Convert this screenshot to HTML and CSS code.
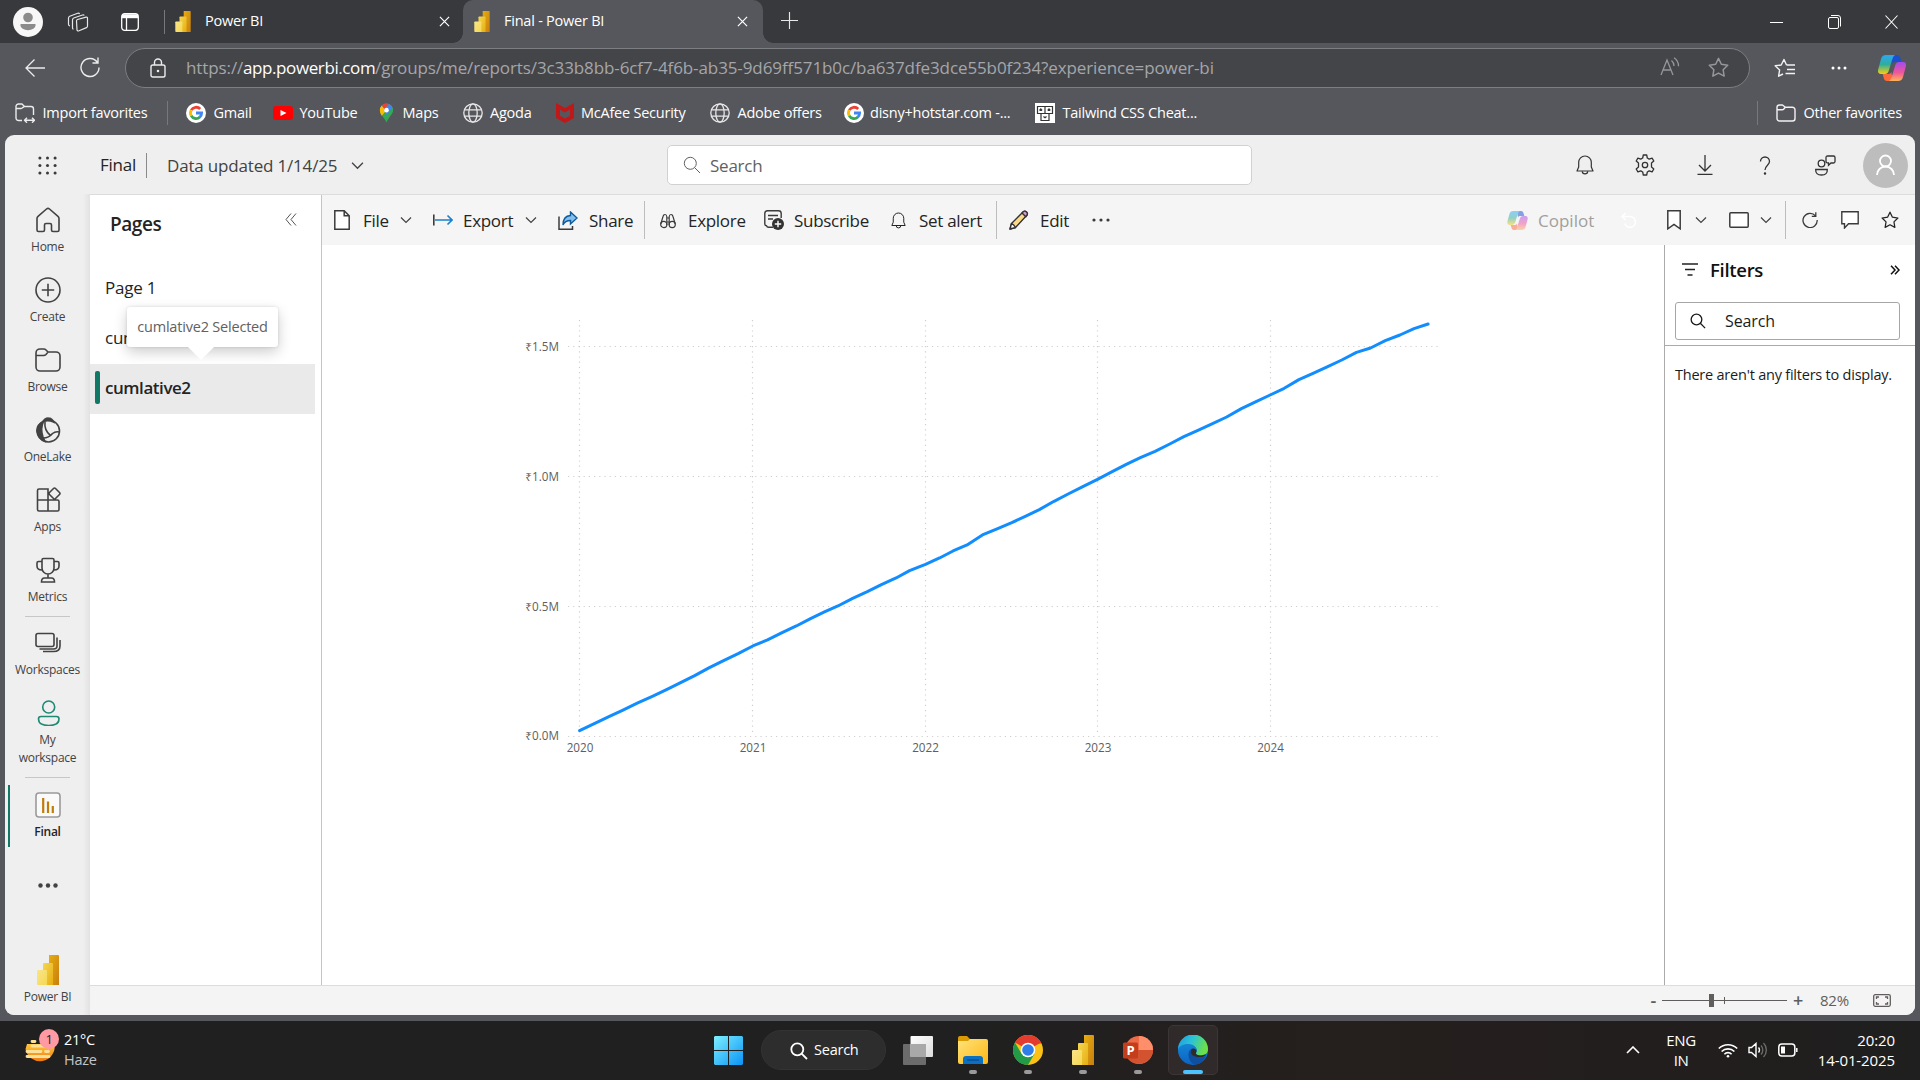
FILE: index.html
```html
<!DOCTYPE html>
<html lang="en">
<head>
<meta charset="utf-8">
<title>Final - Power BI</title>
<link rel="stylesheet" href="styles.css">
</head>
<body>
<svg class="defs" width="0" height="0">
  <defs>
    <linearGradient id="pb1" x1="0" y1="0" x2="1" y2="1"><stop offset="0" stop-color="#e6ad10"/><stop offset="1" stop-color="#c87e0e"/></linearGradient>
    <linearGradient id="pb2" x1="0" y1="0" x2="1" y2="1"><stop offset="0" stop-color="#f6d751"/><stop offset="1" stop-color="#e6ad10"/></linearGradient>
    <linearGradient id="pb3" x1="0" y1="0" x2="1" y2="1"><stop offset="0" stop-color="#f9e589"/><stop offset="1" stop-color="#f6d751"/></linearGradient>
    <linearGradient id="cpA" x1="0" y1="0" x2="0" y2="1"><stop offset="0" stop-color="#2ba7f5"/><stop offset=".5" stop-color="#2fae9a"/><stop offset="1" stop-color="#f7d00d"/></linearGradient>
    <linearGradient id="cpB" x1="0" y1="0" x2="0" y2="1"><stop offset="0" stop-color="#a34bf0"/><stop offset=".55" stop-color="#f0559b"/><stop offset="1" stop-color="#ffb357"/></linearGradient>
    <linearGradient id="win" x1="0" y1="0" x2="1" y2="1"><stop offset="0" stop-color="#7df0ff"/><stop offset="1" stop-color="#0a93f5"/></linearGradient>
    <linearGradient id="fold" x1="0" y1="0" x2="1" y2="1"><stop offset="0" stop-color="#ffe27a"/><stop offset="1" stop-color="#fdb813"/></linearGradient>
    <linearGradient id="edA" x1="0" y1="0" x2="1" y2=".3"><stop offset="0" stop-color="#1d9be0"/><stop offset=".5" stop-color="#2cc3d6"/><stop offset="1" stop-color="#6be04a"/></linearGradient>
    <linearGradient id="edB" x1="0" y1="0" x2="0" y2="1"><stop offset="0" stop-color="#1893dc"/><stop offset="1" stop-color="#0c62c4"/></linearGradient>
    <linearGradient id="sun" x1="0" y1="0" x2="0" y2="1"><stop offset="0" stop-color="#ffc63a"/><stop offset="1" stop-color="#f07a12"/></linearGradient>
    <linearGradient id="tv" x1="0" y1="0" x2="1" y2="1"><stop offset="0" stop-color="#fff"/><stop offset="1" stop-color="#dcdcdc"/></linearGradient>
    <symbol id="pbi" viewBox="0 0 22 30"><path d="M12 0h9a1 1 0 0 1 1 1v29H12z" fill="url(#pb1)"/><path d="M6 9a1 1 0 0 1 1-1h8a1 1 0 0 1 1 1v21H6z" fill="url(#pb2)"/><path d="M0 16a1 1 0 0 1 1-1h8a1 1 0 0 1 1 1v14H1a1 1 0 0 1-1-1z" fill="url(#pb3)"/></symbol>
    <symbol id="google" viewBox="0 0 20 20"><circle cx="10" cy="10" r="10" fill="#fff"/><g fill="none" stroke-width="2.8"><path d="M5.2 7.2a5.6 5.6 0 0 1 9-1.2" stroke="#ea4335"/><path d="M5.2 12.8a5.6 5.6 0 0 1 0-5.6" stroke="#fbbc05"/><path d="M13.9 14a5.6 5.6 0 0 1-8.7-1.2" stroke="#34a853"/><path d="M10 10h5.6a5.6 5.6 0 0 1-1.9 4.2" stroke="#4285f4"/></g></symbol>
    <symbol id="globe" viewBox="0 0 20 20"><g fill="none" stroke="#e8e8e8" stroke-width="1.3"><circle cx="10" cy="10" r="9.2"/><ellipse cx="10" cy="10" rx="4.2" ry="9.2"/><path d="M1.6 6.8h16.8M1.6 13.2h16.8"/></g></symbol>
    <symbol id="chev" viewBox="0 0 12 8"><path d="M1 1.5l5 5 5-5" fill="none" stroke="currentColor" stroke-width="1.2"/></symbol>
    <symbol id="x" viewBox="0 0 12 12"><path d="M1 1l10 10M11 1L1 11" fill="none" stroke="currentColor" stroke-width="1.3"/></symbol>
    <symbol id="copilot" viewBox="0 0 28 26"><path d="M13 0h6q2.500 0 3.300 3l1 4h-6q-2 0-2.600 2z" fill="#1a4fd0"/><path d="M8 0h9q-2 1-3 5l-3 10q-1 4-4 4H3q-4 0-2.700-5L3 4Q4 0 8 0z" fill="url(#cpA)"/><path d="M15 26H9q-2.500 0-3.300-3l-1-4h6q2 0 2.600-2z" fill="#fb6a3c"/><path d="M20 26h-9q2-1 3-5l3-10q1-4 4-4h4q4 0 2.700 5L25 22q-1 4-5 4z" fill="url(#cpB)"/></symbol>
    <symbol id="folder" viewBox="0 0 20 20"><g fill="none" stroke="currentColor" stroke-width="1.4" stroke-linejoin="round"><path d="M1 4.500A2.500 2.500 0 0 1 3.500 2H6.500l2.800 2.200h7A2.700 2.700 0 0 1 19 7v8.500a2.500 2.500 0 0 1-2.500 2.500h-13A2.500 2.500 0 0 1 1 15.500z"/><path d="M1 6.800h5.200q1 0 1.600-.8l1.500-1.800"/></g></symbol>
    <symbol id="bell" viewBox="0 0 18 20"><g fill="none" stroke="currentColor" stroke-width="1.2" stroke-linejoin="round"><path d="M9 1a6.300 6.300 0 0 0-6.300 6.300v4.700L1 16h16l-1.700-4V7.300A6.300 6.300 0 0 0 9 1z"/><path d="M6.300 16.200a2.700 2.700 0 0 0 5.400 0"/></g></symbol>
    <symbol id="star" viewBox="0 0 20 20"><path d="M10 1.300l2.700 5.600 6.100.9-4.400 4.300 1 6.100L10 15.300l-5.400 2.900 1-6.100L1.200 7.800l6.100-.9z" fill="none" stroke="currentColor" stroke-width="1.400" stroke-linejoin="round"/></symbol>
    <symbol id="lens" viewBox="0 0 18 18"><g fill="none" stroke="currentColor"><circle cx="7.300" cy="7.300" r="6"/><path d="M11.600 11.600L17 17"/></g></symbol>
    <symbol id="undo" viewBox="0 0 16 16"><path d="M1 4.500h8a5.400 5.400 0 1 1-5.200 7M4.500 1L1 4.500 4.500 8" fill="none" stroke="currentColor" stroke-width="1.500"/></symbol>
  </defs>
</svg>

<div class="tabstrip">
  <svg class="profile" viewBox="0 0 30 30"><circle cx="15" cy="15" r="15" fill="#f7f7f7"/><circle cx="15" cy="10.500" r="4.800" fill="#8b8b8b"/><path d="M7.500 17h15v1.500a7.500 4.700 0 0 1-15 0z" fill="#8b8b8b"/></svg>
  <svg class="wsp" viewBox="0 0 22 20" fill="none" stroke="#e6e6e6" stroke-width="1.200" stroke-linejoin="round"><path d="M9.500 9q0-1.200 1-1.500l8.500-2.300q1.500-.3 1.500 1V14q0 1.200-1 1.600l-7.500 3.200q-1.500.6-2-.8zM6.500 17.200q-1-.2-1-1.500V8q0-1.500 1.200-2L15.500 3q1.200-.4 1.800.5M3 14q-1.500-.5-1.500-1.800V6q0-1.300 1.200-1.800l8-3q1.300-.4 2 .6"/></svg>
  <svg class="vtab" viewBox="0 0 18 18" fill="none" stroke="#fff" stroke-width="1.300"><rect x=".7" y=".7" width="16.600" height="16.600" rx="3"/><path d="M1 3.200h16" stroke-width="4"/><path d="M5.500 5v12"/></svg>
  <i class="vline"></i>
  <div class="tab"><svg class="fav"><use href="#pbi"/></svg><span>Power BI</span><svg class="close"><use href="#x"/></svg></div>
  <div class="tab active"><svg class="fav"><use href="#pbi"/></svg><span>Final - Power BI</span><svg class="close"><use href="#x"/></svg></div>
  <svg class="plus" viewBox="0 0 18 18"><path d="M9 0v18M0 9h18" stroke="#e8e8e8" stroke-width="1.200"/></svg>
  <div class="winctl">
    <svg width="13" height="14"><path d="M0 7.500h13" stroke="#fff"/></svg>
    <svg width="13" height="14" fill="none" stroke="#fff"><rect x=".5" y="2.500" width="10" height="11" rx="1.500"/><path d="M3 .5h7a2.500 2.500 0 0 1 2.500 2.500v8.500"/></svg>
    <svg width="13" height="14"><path d="M.5 .5l12 13M12.500 .5l-12 13" stroke="#fff" stroke-width="1.100"/></svg>
  </div>
</div>

<div class="navbar">
  <svg class="back" viewBox="0 0 20 18" fill="none" stroke="#ececec" stroke-width="1.300"><path d="M20 9H1M9.500 .5L1 9l8.500 8.500"/></svg>
  <svg class="reload" viewBox="0 0 20 21" fill="none" stroke="#ececec" stroke-width="1.400"><path d="M17.500 5.500A9 9 0 1 0 19 10.500M18 .5v5.500h-5.500"/></svg>
  <div class="address">
    <svg class="lock" viewBox="0 0 16 20" fill="none" stroke="#ececec" stroke-width="1.400"><rect x="1" y="7" width="14" height="12" rx="1.800"/><path d="M4.500 7V4.500a3.500 3.500 0 0 1 7 0V7"/><circle cx="8" cy="13" r=".6" fill="#fff"/></svg>
    <span class="url"><span class="scheme">https://</span><b>app.powerbi.com</b><span>/groups/me/reports/3c33b8bb-6cf7-4f6b-ab35-9d69ff571b0c/ba637dfe3dce55b0f234?experience=power-bi</span></span>
    <svg class="read" viewBox="0 0 20 19" fill="none" stroke="#96979a" stroke-width="1.300"><path d="M1 18L7 3l6 15M3 13h8M11.500 3.500a7 7 0 0 1 2.500 5.500M14 .8a10 10 0 0 1 4.500 8.500"/></svg>
    <svg class="starg"><use href="#star"/></svg>
  </div>
  <svg class="favs" viewBox="0 0 21 20" fill="none" stroke="#f2f2f2" stroke-width="1.400" stroke-linejoin="round"><path d="M12.500 7L10 1.500 7.200 7 1.200 7.800l4.400 4.300-1 6.100L9 16M12.500 7H21M13 11.500h8M11.500 15.500H21"/></svg>
  <svg class="dots" viewBox="0 0 16 4" fill="#fff"><circle cx="2" cy="2" r="1.500"/><circle cx="8" cy="2" r="1.500"/><circle cx="14" cy="2" r="1.500"/></svg>
  <svg class="cop"><use href="#copilot"/></svg>
</div>

<div class="bookmarks">
  <span class="bm b1"><svg viewBox="0 0 20 20" fill="none" stroke="#ececec" stroke-width="1.400" stroke-linejoin="round"><path d="M7 17.500H3.500A2.500 2.500 0 0 1 1 15V3.500A2.500 2.500 0 0 1 3.500 1H7l2.500 2.500h6.500A2.500 2.500 0 0 1 18.500 6v6M1 5.500h5q1 0 1.600-.8L9.500 3.500M9.500 17.200h10M12 14.700l-2.500 2.500 2.500 2.500M17 14.700l2.500 2.500-2.500 2.500"/></svg>Import favorites</span>
  <i class="vline"></i>
  <span class="bm b2"><svg><use href="#google"/></svg>Gmail</span>
  <span class="bm b3"><svg viewBox="0 0 20 20"><rect y="3" width="20" height="14" rx="3" fill="#f00"/><path d="M7.500 7l6 3-6 3z" fill="#fff"/></svg>YouTube</span>
  <span class="bm b4"><svg viewBox="0 0 20 20"><path d="M3 7a7 7 0 0 1 14 0c0 4-4 6-7 13-1-4-7-8-7-13z" fill="#34a853"/><path d="M3 7a7 7 0 0 1 2-5l5 5-5 6q-2-3-2-6z" fill="#fbbc04"/><path d="M5 2a7 7 0 0 1 7.500-1.500L8 6z" fill="#ea4335"/><path d="M12.500 .5a7 7 0 0 1 4 4L10 12 7.500 6.500z" fill="#4285f4"/><circle cx="10" cy="7" r="2.400" fill="#fff"/></svg>Maps</span>
  <span class="bm b5"><svg><use href="#globe"/></svg>Agoda</span>
  <span class="bm b6"><svg viewBox="0 0 20 20"><path d="M1 0l9 5 9-5v15l-9 5-9-5zM5 6.500v6.300l5 2.700 5-2.700V6.500l-5 3z" fill="#c01818" fill-rule="evenodd"/></svg>McAfee Security</span>
  <span class="bm b7"><svg><use href="#globe"/></svg>Adobe offers</span>
  <span class="bm b8"><svg><use href="#google"/></svg>disny+hotstar.com -...</span>
  <span class="bm b9"><svg viewBox="0 0 20 20"><path d="M0 0h20v20H0z" fill="#fff"/><path d="M2.500 3.500h15v7h-15zM6 10.500v7h8v-7M10 3.500v7M4.500 7.500l1.300-1.500 1.300 1.500M12.700 7.500L14 6l1.300 1.500M8.500 13.500l1.500 1.300 1.500-1.300" fill="none" stroke="#333" stroke-width="1.200"/></svg>Tailwind CSS Cheat...</span>
  <i class="vline end"></i>
  <span class="bm b10"><svg class="ofold"><use href="#folder"/></svg>Other favorites</span>
</div>

<div class="frame"><div class="app">
  <header class="top">
    <svg class="waffle" viewBox="0 0 20 20" fill="#3b3b3b"><g id="wr"><circle cx="2" cy="2" r="1.600"/><circle cx="10" cy="2" r="1.600"/><circle cx="18" cy="2" r="1.600"/></g><use href="#wr" y="8"/><use href="#wr" y="16"/></svg>
    <span class="tname">Final</span>
    <span class="updated">Data updated 1/14/25</span>
    <svg class="chev big"><use href="#chev"/></svg>
    <div class="gsearch"><svg><use href="#lens"/></svg>Search</div>
    <div class="ticons">
      <svg width="18" height="20"><use href="#bell"/></svg>
      <svg width="22" height="22" viewBox="0 0 22 22" fill="none" stroke="currentColor" stroke-width="1.300" stroke-linejoin="round"><circle cx="11" cy="11" r="2.700"/><path d="M9.300 1h3.400l.6 3 1.900 1.100 2.900-1 1.700 2.900L17.500 9v2 2l2.300 2-1.700 2.900-2.900-1-1.900 1.100-.6 3H9.300l-.6-3-1.900-1.100-2.900 1L2.200 15l2.300-2V9L2.200 7l1.700-2.900 2.900 1L8.700 4z"/></svg>
      <svg width="18" height="20" viewBox="0 0 18 20" fill="none" stroke="currentColor" stroke-width="1.300"><path d="M9 0v15.500M3 10l6 6 6-6M1.500 19.300h15"/></svg>
      <svg width="12" height="19" viewBox="0 0 12 19" fill="none" stroke="currentColor" stroke-width="1.300"><path d="M1.500 5.500A4.500 4.500 0 0 1 10.500 5.500C10.500 9 6 9.500 6 14"/><circle cx="6" cy="17.500" r=".6" fill="currentColor"/></svg>
      <svg width="22" height="21" viewBox="0 0 22 21" fill="none" stroke="currentColor" stroke-width="1.300"><circle cx="7.500" cy="8.500" r="3.300"/><path d="M1.700 14.500h11.600q.3 5.500-5.800 5.500T1.700 14.500zM12 2.500Q12 1 13.500 1h6Q21 1 21 2.500v4q0 1.500-1.500 1.500H17l-2.500 2.200V8Q12 8 12 6.500z"/></svg>
      <svg class="avatar" viewBox="0 0 45 45" fill="none"><circle cx="22.500" cy="22.500" r="22.500" fill="#bdbdbd"/><circle cx="22.500" cy="18" r="5.500" stroke="#fff" stroke-width="1.800"/><path d="M14 32a8.500 8.500 0 0 1 17 0" stroke="#fff" stroke-width="1.800"/></svg>
    </div>
  </header>
  <div class="body">
    <nav class="rail">
      <a><svg viewBox="0 0 26 26"><path d="M2 11.500q0-1.300 1-2.100L11.500 2q1.500-1.200 3 0L23 9.400q1 .8 1 2.100V23q0 1.500-1.500 1.500H18q-1.500 0-1.500-1.500v-5q0-1.500-1.500-1.500h-4q-1.500 0-1.500 1.500v5q0 1.500-1.500 1.500H3.500Q2 24.500 2 23z"/></svg>Home</a>
      <a><svg viewBox="0 0 26 26"><circle cx="13" cy="13" r="12"/><path d="M13 6.800v12.400M6.800 13h12.400"/></svg>Create</a>
      <a><svg viewBox="0 0 26 26"><path d="M1 6a4 4 0 0 1 4-4h4q1 0 2 1l2 2h8a4 4 0 0 1 4 4v11a4 4 0 0 1-4 4H5a4 4 0 0 1-4-4zM1 8.500h7.500q1.500 0 2.500-1L13 5"/></svg>Browse</a>
      <a><svg viewBox="0 0 26 26"><circle cx="13.500" cy="14" r="11"/><path d="M8 4.500Q10 .8 13.500 1q3.500 0 5 4-5-2.500-10.500-.5zM2 15Q1 8 8.500 4.500 5 11 8 20q1 2 2 4.500Q3 22 2 15z" fill="#424242"/><path d="M10 4.500q-1 9 5.500 14M8 21q6 0 9.500-4.500 3-2.500 7-1.500"/></svg>OneLake</a>
      <a><svg viewBox="0 0 26 26"><path d="M2.500 3.500q0-1.500 1.500-1.500h9v22H4q-1.500 0-1.500-1.500zM2.500 13h20q1.500 0 1.500 1.500v8q0 1.500-1.500 1.500H13M18.500 1.500q1-1 2 0l4 4q1 1 0 2l-4 4q-1 1-2 0l-4-4q-1-1 0-2z"/></svg>Apps</a>
      <a><svg viewBox="0 0 26 26"><path d="M7 3q0-1.500 1.500-1.500h9Q19 1.500 19 3v8a6 6 0 0 1-12 0zM7 4.500H3.500Q2 4.500 2 6v3q0 4 5 4M19 4.500h3.500Q24 4.500 24 6v3q0 4-5 4M13 17v4M6.500 25q0-4 3-4h7q3 0 3 4z"/></svg>Metrics</a>
      <hr class="first">
      <a><svg viewBox="0 0 26 26"><rect x="1" y="3.500" width="18" height="13" rx="2"/><path d="M22 7.500V16q0 3-3.500 3H4.500M25 10v6q0 5.500-6.500 5.500H8"/></svg>Workspaces</a>
      <a class="myws"><svg viewBox="0 0 26 26"><circle cx="13.700" cy="7" r="6"/><path d="M3.500 19q0-2.500 2.500-2.500h15.500q2.500 0 2.500 2.500 0 6.500-10.200 6.500T3.500 19z"/></svg>My<br>workspace</a>
      <hr>
      <a class="final"><svg viewBox="0 0 26 26"><rect x="1" y="1" width="24" height="24" rx="3" fill="#fafafa" stroke="#9a9a9a"/><path d="M8.200 6v15M13 9.500V21M17.800 14v7" stroke="#c07c0a" stroke-width="2.200"/></svg>Final</a>
      <svg class="more" viewBox="0 0 20 5" fill="#424242"><circle cx="2.500" cy="2.500" r="2.200"/><circle cx="10" cy="2.500" r="2.200"/><circle cx="17.500" cy="2.500" r="2.200"/></svg>
      <a class="brand"><svg><use href="#pbi"/></svg>Power BI</a>
    </nav>
    <div class="main">
      <div class="cols">
        <section class="pages">
          <div class="phead"><h2>Pages</h2><svg viewBox="0 0 12 13" fill="none" stroke="#555" stroke-width="1"><path d="M6 .5l-5 6 5 6M11 .5l-5 6 5 6"/></svg></div>
          <div class="page">Page 1</div>
          <div class="page">cumlative</div>
          <div class="page sel">cumlative2<div class="tip">cumlative2 Selected</div></div>
        </section>
        <div class="report">
          <div class="bar">
            <svg class="i-file" viewBox="0 0 16 20" fill="#fff" stroke="#3b3b3b" stroke-width="1.500"><path d="M.8.800h9.400l5 5v13.400H.8zM10.200.800v5h5"/></svg>
            <span class="t-file">File</span><svg class="chev"><use href="#chev"/></svg>
            <svg class="i-exp" viewBox="0 0 20 12" fill="none" stroke="#1a80cc" stroke-width="1.600"><path d="M2 6h17M14.500 1.500L19 6l-4.500 4.500"/><path d="M.8 .5v11" stroke="#3b3b3b"/></svg>
            <span class="t-exp">Export</span><svg class="chev"><use href="#chev"/></svg>
            <svg class="i-share" viewBox="0 0 20 19"><path d="M1 5.500v12.700h13.500V15" fill="none" stroke="#3b3b3b" stroke-width="1.500"/><path d="M12.500 1l6.500 6-6.500 6V9.500Q7 9.500 5 14 5 5 12.500 4.500z" fill="#83beec" stroke="#0f5b9c" stroke-width="1.400"/></svg>
            <span class="t-share">Share</span>
            <i class="sep"></i>
            <svg class="i-bin" viewBox="0 0 16 16" fill="none" stroke="#3b3b3b" stroke-width="1.200"><circle cx="3.800" cy="11.500" r="3.100"/><circle cx="12.200" cy="11.500" r="3.100"/><path d="M.8 11L3 3.500q.5-2 2-2t1.800 2V12M15.200 11L13 3.500q-.5-2-2-2t-1.800 2V12M6.800 5h2.400M6.800 9h2.400"/></svg>
            <span class="t-explore">Explore</span>
            <svg class="i-sub" viewBox="0 0 20 20" fill="none" stroke="#3b3b3b" stroke-width="1.400"><path d="M9 17.300H4.500q-1.500 0-2-1.500Q.8 15.500.8 14V3.500Q.8.800 3.500.800h11q2.700 0 2.700 2.700V8M4 5.500h10M4 9h5"/><circle cx="14" cy="14" r="6" fill="#333" stroke="none"/><path d="M14 10.800v6.400M10.800 14h6.400" stroke="#fff"/></svg>
            <span class="t-sub">Subscribe</span>
            <svg class="i-bell"><use href="#bell"/></svg>
            <span class="t-alert">Set alert</span>
            <i class="sep"></i>
            <svg class="i-pen" viewBox="0 0 20 20" stroke="#333" stroke-width="1.400" stroke-linejoin="round"><path d="M1 19l1.500-5.500L14.500 1.500q1.500-1 3 .5t.5 3L6.500 17.500z" fill="#fbd98a"/><path d="M13 3l1.500-1.500q1.500-1 3 .5t.5 3L16.800 6.800z" fill="#d59ad8"/><path d="M1 19l1.500-5.500q2.500 1 4 4z" fill="#fff"/></svg>
            <span class="t-edit">Edit</span>
            <svg class="i-dots" viewBox="0 0 18 4" fill="#3b3b3b"><circle cx="2" cy="2" r="1.600"/><circle cx="9" cy="2" r="1.600"/><circle cx="16" cy="2" r="1.600"/></svg>
            <div class="right">
              <svg class="i-cop"><use href="#copilot"/></svg>
              <span class="t-cop">Copilot</span>
              <svg class="i-undo"><use href="#undo"/></svg>
              <svg class="i-mark" viewBox="0 0 14 20" fill="#fff" stroke="#3b3b3b" stroke-width="1.500"><path d="M.8.800h12.400v18L7 14.500 .8 18.800z"/></svg>
              <svg class="chev"><use href="#chev"/></svg>
              <svg class="i-rect" viewBox="0 0 20 16"><rect x=".8" y=".8" width="18.400" height="14.400" rx="1" fill="#fff" stroke="#3b3b3b" stroke-width="1.500"/></svg>
              <svg class="chev"><use href="#chev"/></svg>
              <i class="sep"></i>
              <svg class="i-ref" viewBox="0 0 16 16" fill="none" stroke="#3b3b3b" stroke-width="1.300"><path d="M13.500 3.800A7.100 7.100 0 1 0 15.200 8M13.800.3v4h-4"/></svg>
              <svg class="i-com" viewBox="0 0 18 18" fill="#fff" stroke="#3b3b3b" stroke-width="1.400"><path d="M.8.800h16.400v12H7.500L3.500 17v-4.200H.8z"/></svg>
              <svg class="i-star"><use href="#star"/></svg>
            </div>
          </div>
          <div class="canvas">
            <div class="visual">
              <svg width="1342" height="740" viewBox="322 245 1342 740">
                <g class="grid">
                  <path d="M568 346.500H1440M568 476.500H1440M568 606.500H1440M568 736.500H1440"/>
                  <path d="M579.500 320V736M752.500 320V736M925.500 320V736M1097.500 320V736M1270.500 320V736"/>
                </g>
                <polyline class="line" transform="translate(500 300) scale(.6122 .3333)" points="130,1292 154,1271 177,1251 200,1231 225,1209 248,1190 272,1169 295,1148 318,1127 342,1103 366,1081 389,1061 413,1038 437,1020 460,999 484,978 508,955 530,936 552,918 576,895 600,875 623,854 647,834 669,812 695,793 718,774 740,753 763,735 788,705 810,688 836,668 858,649 881,629 905,604 928,582 952,560 976,538 1000,515 1023,493 1046,473 1070,454 1094,432 1117,410 1140,391 1163,372 1187,351 1211,326 1235,305 1258,285 1281,265 1305,239 1328,220 1352,200 1375,180 1399,157 1422,144 1446,122 1470,105 1493,86 1516,72"/>
                <g class="lab y"><text x="559" y="351">₹1.5M</text><text x="559" y="481">₹1.0M</text><text x="559" y="611">₹0.5M</text><text x="559" y="740">₹0.0M</text></g>
                <g class="lab"><text x="580" y="752">2020</text><text x="753" y="752">2021</text><text x="925.500" y="752">2022</text><text x="1098" y="752">2023</text><text x="1270.500" y="752">2024</text></g>
              </svg>
            </div>
            <aside class="filters">
              <div class="fhead"><svg width="16" height="14" viewBox="0 0 16 14" stroke="#222" stroke-width="1.600"><path d="M0 1h16M3 6.500h10M5.500 12h5"/></svg><h2>Filters</h2><svg width="10" height="10" viewBox="0 0 10 10" fill="none" stroke="#111" stroke-width="1.500"><path d="M1 .8L5 5 1 9.200M5 .8L9 5 5 9.200"/></svg></div>
              <div class="fsearch"><svg><use href="#lens"/></svg>Search</div>
              <p>There aren't any filters to display.</p>
            </aside>
          </div>
        </div>
      </div>
      <footer class="status">
        <span class="pm">-</span><div class="slider"><i class="thumb"></i><i class="tick"></i></div><span class="pm plus2">+</span><span class="pct">82%</span>
        <svg width="18" height="13" viewBox="0 0 18 13" fill="none" stroke="#605e5c" stroke-width="1.300"><rect x=".7" y=".7" width="16.600" height="11.600" rx="1.500"/><path d="M3.500 5V3h2.500M12 3h2.500v2M3.500 8v2H6M12 10h2.500V8"/></svg>
      </footer>
    </div>
  </div>
</div></div>

<div class="taskbar">
  <div class="weather">
    <svg width="36" height="36" viewBox="0 0 36 36"><path d="M3 12h27.500a14.500 14.500 0 0 1-29 5z" fill="url(#sun)"/><g stroke="#fbe09a" stroke-width="2.800" stroke-linecap="round"><path d="M8 9.500h3M8 14h18M3 19.500h14M21.500 19.500h3M3 24.500h22"/></g></svg>
    <b class="badge">1</b>
    <div><span>21°C</span><em>Haze</em></div>
  </div>
  <div class="dock">
    <svg class="win" viewBox="0 0 29 29"><path d="M1 0h13v14H0V1zM15 0h13l1 1v13H15zM0 15h14v14H1l-1-1zM15 15h14v13l-1 1H15z" fill="url(#win)"/></svg>
    <div class="tsearch"><svg viewBox="0 0 18 18" fill="none" stroke="#fff" stroke-width="1.800"><circle cx="7.300" cy="7.300" r="6"/><path d="M11.600 11.600L17 17"/></svg>Search</div>
    <svg class="tview" viewBox="0 0 30 29"><rect y="8" width="23" height="21" rx="1" fill="#6c6c6c"/><rect x="7.500" width="22.500" height="21" rx="1" fill="url(#tv)"/><path d="M7.500 8H23v13H7.500z" fill="#a9a9a9"/></svg>
    <span class="tile"><svg viewBox="0 0 30 28"><path d="M0 2q0-2 2-2h7l3 3H28v6H0z" fill="#d99a06"/><path d="M0 5h10l2-2h16q2 0 2 2v21q0 2-2 2H2q-2 0-2-2z" fill="url(#fold)"/><path d="M5 28v-5q0-3 3-3h14q3 0 3 3v5z" fill="#0b6fc2"/><path d="M9 24h12" stroke="#08458a" stroke-width="1.200"/></svg></span>
    <span class="tile"><svg viewBox="0 0 30 30"><circle cx="15" cy="15" r="15" fill="#fbc116"/><path d="M15 15L2 7.500A15 15 0 0 1 28 7.500z" fill="#e33b2e"/><path d="M2 7.500A15 15 0 0 0 15 30l6.500-11.300L8.500 18.700z" fill="#229b48"/><path d="M15 8h13.200" stroke="#e33b2e"/><circle cx="15" cy="15" r="7.300" fill="#fff"/><circle cx="15" cy="15" r="5.800" fill="#2f7de9"/></svg></span>
    <span class="tile"><svg><use href="#pbi"/></svg></span>
    <span class="tile"><svg viewBox="0 0 30 30"><circle cx="16" cy="15" r="14" fill="#ed6c47"/><path d="M16 1a14 14 0 0 1 14 14H16z" fill="#ff8f6b"/><path d="M30 15a14 14 0 0 1-27.900 1.500L16 15z" fill="#d35230"/><rect y="7.500" width="15" height="16" rx="1.500" fill="#c43e1c"/><text x="7.500" y="20" text-anchor="middle" class="pp">P</text></svg></span>
    <span class="tile on"><svg viewBox="0 0 30 30"><circle cx="15" cy="15" r="15" fill="url(#edB)"/><path d="M0 15A15 15 0 0 1 30 14c0 5-4 6.500-7 6.500-4 0-6-1.500-4.500-3.200C20 15 18 10 11.500 9 5 8.500 1 11 0 15z" fill="url(#edA)"/><path d="M10.500 19c0-3.500 2-5 4-5.500-2 3 0 9 7 9 3 0 5-.8 6.500-1.700C25.500 26.500 21 30 16 29.500 12.500 28 10.500 23 10.500 19z" fill="#0f4fa0"/><path d="M13 17q0-4 3-3.500 3.500 1 2 4-1 2.500 5 3l5-1.300-.5 1.500q-4 2-7.500 1.500Q13 21.500 13 17z" fill="#302b2a"/></svg></span>
  </div>
  <div class="tray">
    <svg width="14" height="8" viewBox="0 0 14 8"><path d="M1 7l6-6 6 6" fill="none" stroke="#fff" stroke-width="1.600"/></svg>
    <div class="lang">ENG<br>IN</div>
    <svg class="wifi" viewBox="0 0 20 15" fill="none" stroke="#fff" stroke-width="1.600"><path d="M.8 5.500a13 13 0 0 1 18.400 0M3.600 8.500a9 9 0 0 1 12.800 0M6.400 11.200a5 5 0 0 1 7.200 0"/><circle cx="10" cy="13.300" r="1.300" fill="#fff" stroke="none"/></svg>
    <svg class="spk" viewBox="0 0 20 16" fill="none" stroke="#fff" stroke-width="1.400"><path d="M1 5.500h2.500L8 1.500v13L3.500 10.500H1zM10.500 5.500a4 4 0 0 1 0 5"/><path d="M13 3.500a6.500 6.500 0 0 1 0 9M15.500 1a10 10 0 0 1 0 14" stroke="#6a6a6a"/></svg>
    <svg class="bat" viewBox="0 0 20 14" fill="none" stroke="#fff" stroke-width="1.500"><rect x=".8" y="1" width="16" height="12" rx="3"/><path d="M18.800 5v4"/><rect x="3" y="3.500" width="4" height="7" fill="#fff" stroke="none"/></svg>
    <div class="clock">20:20<br>14-01-2025</div>
  </div>
</div>
</body>
</html>
```
FILE: styles.css
```css
* { box-sizing: border-box; }
body {
  margin: 0; width: 1920px; height: 1080px; overflow: hidden;
  display: flex; flex-direction: column;
  background: #56575c; color: #242424;
  font-family: "Open Sans", "Noto Sans", sans-serif;
  font-size: 14.5px; letter-spacing: -0.016em; line-height: 1; white-space: nowrap;
}
svg { display: block; flex: none; }
.defs { position: absolute; }
h2, p { margin: 0; }

/* tab strip */
.tabstrip { height: 43px; flex: none; display: flex; align-items: center; background: #38393d; color: #fff; }
.profile { width: 30px; height: 30px; margin-left: 13px; }
.wsp { width: 22px; height: 20px; margin-left: 24px; }
.vtab { width: 18px; height: 18px; margin-left: 32px; }
.vline { width: 1px; height: 24px; background: #77787c; flex: none; }
.tabstrip .vline { margin-left: 25px; }
.tab { display: flex; align-items: center; height: 43px; width: 298px; padding: 0 13px 0 9px; position: relative; }
.tab.active { background: #56575c; border-radius: 10px 10px 0 0; width: 300px; padding: 0 15px 0 10px; }
.tab.active::before, .tab.active::after { content: ""; position: absolute; bottom: 0; width: 10px; height: 10px; }
.tab.active::before { left: -10px; background: radial-gradient(circle at 0 0, transparent 9.5px, #56575c 10px); }
.tab.active::after { right: -10px; background: radial-gradient(circle at 100% 0, transparent 9.5px, #56575c 10px); }
.fav { width: 18px; height: 21px; }
.tab span { flex: 1; margin-left: 13px; margin-top: -1px; }
.close { width: 11px; height: 11px; }
.plus { width: 17px; height: 17px; margin-left: 18px; margin-top: -2px; }
.winctl { margin-left: auto; margin-right: 22px; display: flex; gap: 44.500px; }

/* address row */
.navbar { height: 49px; flex: none; display: flex; align-items: center; }
.back { width: 20px; height: 18px; margin-left: 25px; }
.reload { width: 20px; height: 21px; margin-left: 35px; }
.address { margin-left: 25px; width: 1625px; height: 40px; border: 1px solid #7d7e82; border-radius: 20px; background: #444549; display: flex; align-items: center; padding-left: 24px; }
.lock { width: 16px; height: 20px; }
.url { margin-left: 20px; font-size: 17px; color: #a5a6a9; letter-spacing: -0.1px; width: 1474px; display: flex; }
.url b { font-weight: 400; color: #fff; letter-spacing: -0.4px; width: 132px; }
.url .scheme { width: 57px; }
.read { width: 20px; height: 19px; margin-top: -3px; }
.starg { width: 21px; height: 21px; margin-left: 28px; color: #96979a; }
.favs { width: 21px; height: 20px; margin-left: 24px; }
.dots { width: 16px; height: 4px; margin-left: 36px; }
.cop { width: 28px; height: 26px; margin-left: 31px; }

/* bookmarks */
.bookmarks { height: 43px; flex: none; display: flex; align-items: center; padding: 0 0 1px 15px; color: #fff; }
.bm { display: flex; align-items: center; gap: 7.500px; line-height: 20px; flex: none; }
.bm svg { width: 20px; height: 20px; }
.b1 { width: 152px; } .b2 { width: 87px; margin-left: 18px; } .b3 { width: 104px; } .b4 { width: 84.500px; }
.b5 { width: 92px; } .b6 { width: 155.500px; } .b7 { width: 133.500px; } .b8 { width: 191.500px; }
.b3, .b6, .b8 { gap: 6.500px; }
.b4 svg { margin: 0 -1px; width: 19px; }
.b4 { margin-left: 1px; }
.b10 { margin-left: 18px; }
.vline.end { margin-left: auto; }
.b10 { width: 144px; }
.ofold { color: #f2f2f2; }

/* application frame */
.frame { height: 886px; flex: none; padding: 0 5px 6px; }
.app { height: 880px; background: #efefef; border-radius: 9px; overflow: hidden; display: flex; flex-direction: column; color: #424242; }
.top { height: 59px; display: flex; align-items: center; font-size: 17px; flex: none; }
.waffle { width: 19px; height: 19px; margin-left: 33px; margin-top: 1px; }
.tname { margin-left: 43px; color: #242424; width: 47px; height: 25px; line-height: 24px; border-right: 1px solid #8a8a8a; margin-top: 2px; }
.updated { margin-left: 20px; width: 184px; margin-top: 1px; letter-spacing: -0.18px; }
.chev { width: 12px; height: 8px; color: #424242; }
.chev.big { width: 13px; height: 9px; margin-top: 2px; }
.gsearch { margin-left: 303px; width: 585px; height: 40px; background: #fff; border: 1px solid #d1d1d1; border-radius: 5px; display: flex; align-items: center; padding: 1px 0 0 15px; color: #616161; }
.gsearch svg { width: 18px; height: 18px; margin-right: 9px; margin-top: -1px; }
.ticons { flex: 1; margin-top: 1px; display: flex; align-items: center; justify-content: flex-end; padding-right: 7px; color: #333; }
.ticons svg:nth-child(2) { margin-left: 40px; }
.ticons svg:nth-child(3) { margin-left: 40px; }
.ticons svg:nth-child(4) { margin-left: 45px; }
.ticons svg:nth-child(5) { margin-left: 43px; }
.ticons .avatar { width: 45px; height: 45px; margin-left: 27px; margin-top: 1px; }
.body { flex: 1; display: flex; min-height: 0; }

/* left rail */
.rail { width: 85px; flex: none; display: flex; flex-direction: column; align-items: center; font-size: 12px; padding-top: 13px; background: linear-gradient(90deg, #efefef 78px, #e2e2e2); }
.rail a { display: flex; flex-direction: column; align-items: center; height: 70px; line-height: 17.500px; text-align: center; letter-spacing: -0.25px; flex: none; }
.rail svg { fill: none; stroke: #424242; stroke-width: 1.600; }
.rail a svg { width: 26px; height: 26px; margin: 0 0 5px 1px; }
.rail hr { width: 45px; height: 1px; border: 0; background: #c7c7c7; margin: -10px 0 14px; flex: none; }
.rail hr.first { margin: -11px 0 13px; }
.rail .myws { height: 87px; }
.rail .myws svg { stroke: #1f8a74; }
.rail a.final { width: 79px; height: 62px; margin-top: -7px; padding: 7px 2px 0 0; border-left: 2px solid #117865; color: #242424; font-weight: 600; }
.rail .more { width: 20px; height: 5px; stroke: none; fill: #424242; margin-top: 36px; }
.rail .brand { margin-top: 67px; height: 50px; }
.rail .brand svg { width: 22px; height: 30px; margin: 0 0 3px 1px; stroke: none; }

/* pages pane */
.main { flex: 1; min-width: 0; display: flex; flex-direction: column; border-top: 1px solid #dcdcdc; }
.cols { height: 790px; display: flex; flex: none; }
.pages { width: 232px; background: #fff; border-right: 1px solid #c4c4c4; font-size: 17px; color: #242424; flex: none; }
.phead { display: flex; justify-content: space-between; padding: 17px 24px 0 20px; height: 68px; }
.phead svg { margin-top: 1px; }
h2 { font-weight: 600; line-height: 24px; }
.phead h2 { font-size: 19px; letter-spacing: -0.45px; }
.phead svg { width: 12px; height: 13px; }
.page { height: 50px; line-height: 50px; padding-left: 15px; position: relative; }
.page.sel { background: #eaeaea; width: 225px; font-weight: 600; margin-top: 1px; line-height: 48px; letter-spacing: -0.45px; }
.page.sel::before { content: ""; position: absolute; left: 5px; top: 7px; width: 5px; height: 33px; border-radius: 2px; background: #117865; }
.tip { position: absolute; left: 37px; top: -57px; width: 151px; height: 40px; background: #fff; border-radius: 3px; box-shadow: 0 5px 14px rgba(0,0,0,.2), 0 0 3px rgba(0,0,0,.12); font-size: 14.500px; font-weight: 400; color: #616161; line-height: 40px; text-align: center; letter-spacing: -0.2px; }
.tip::after { content: ""; position: absolute; left: 61px; top: 40px; border: 13px solid transparent; border-top-color: #fff; border-bottom: 0; }

/* report toolbar */
.report { flex: 1; min-width: 0; display: flex; flex-direction: column; }
.bar { height: 50px; background: #f5f5f5; display: flex; align-items: center; padding-left: 12px; font-size: 17px; color: #242424; flex: none; letter-spacing: -0.3px; }
.sep { width: 1px; height: 38px; background: #bdbdbd; flex: none; }
.bar span { flex: none; }
.i-file { width: 16px; height: 20px; } .t-file { width: 37px; margin-left: 13px; }
.i-exp { width: 20px; height: 12px; margin-left: 21px; } .t-exp { width: 62px; margin-left: 10px; }
.i-share { width: 20px; height: 19px; margin-left: 21px; } .t-share { width: 55px; margin-left: 11px; }
.i-bin { width: 16px; height: 16px; margin: 2px 0 0 15px; } .t-explore { width: 76px; margin-left: 12px; }
.i-sub { width: 20px; height: 20px; } .t-sub { width: 97px; margin-left: 10px; }
.i-bell { width: 15px; height: 17px; } .t-alert { width: 77px; margin-left: 13px; }
.i-pen { width: 20px; height: 20px; margin-left: 12px; } .t-edit { width: 52px; margin-left: 11px; }
.i-dots { width: 18px; height: 4px; }
.right { margin-left: auto; display: flex; align-items: center; padding-right: 16px; }
.i-cop { width: 21px; height: 19px; opacity: .5; } .t-cop { width: 83px; margin-left: 10px; color: #a19f9d; letter-spacing: 0; }
.i-undo { width: 16px; height: 16px; color: #fff; } .i-mark { width: 14px; height: 20px; margin: 0 14px 0 30px; }
.i-rect { width: 20px; height: 16px; margin: 0 11px 0 22px; }
.right .sep { margin-left: 13px; }
.i-ref { width: 16px; height: 16px; margin-left: 16px; } .i-com { width: 18px; height: 18px; margin-left: 23px; } .i-star { width: 18px; height: 18px; margin-left: 22px; }

/* chart */
.canvas { flex: 1; display: flex; min-height: 0; background: #fff; }
.visual { flex: 1; min-width: 0; }
.grid path { fill: none; stroke: #cfcfcf; stroke-width: 1.200; stroke-dasharray: 1.200 4; }
.line { fill: none; stroke: #118dff; stroke-width: 3; stroke-linejoin: round; stroke-linecap: round; vector-effect: non-scaling-stroke; }
.lab { font-size: 11.700px; fill: #605e5c; text-anchor: middle; letter-spacing: 0; }
.lab.y { text-anchor: end; letter-spacing: 0; }

/* filters pane */
.filters { width: 251px; flex: none; border-left: 1px solid #ababab; color: #1b1b1b; }
.fhead { display: flex; align-items: center; height: 57px; padding: 0 15px 8px 17px; }
.fhead h2 { font-size: 18.500px; flex: 1; margin-left: 12px; color: #111; letter-spacing: -0.3px; }
.fsearch { width: 225px; height: 38px; margin-left: 10px; border: 1px solid #a6a6a6; border-radius: 3px; display: flex; align-items: center; padding-left: 14px; font-size: 16px; letter-spacing: -0.1px; }
.fsearch svg { width: 16px; height: 16px; margin-right: 19px; stroke-width: 1.5; }
.filters p { margin-top: 5px; border-top: 1px solid #ababab; padding: 22px 0 0 10px; letter-spacing: -0.22px; }

.status { flex: 1; background: #f4f4f4; border-top: 1px solid #dcdcdc; display: flex; align-items: center; justify-content: flex-end; padding-right: 24px; color: #605e5c; }
.pm { font-size: 18px; font-weight: 600; line-height: 20px; margin-right: 6px; margin-top: -2px; }
.plus2 { margin: -2px 0 0 6px; width: 27px; }
.slider { width: 125px; height: 1px; background: #605e5c; position: relative; }
.thumb { position: absolute; left: 47px; top: -6px; width: 5px; height: 13px; background: #605e5c; }
.tick { position: absolute; left: 62px; top: -3px; width: 1px; height: 7px; background: #605e5c; }
.pct { width: 53px; font-size: 15px; margin-top: -1px; }

/* taskbar */
.taskbar { flex: 1; background: linear-gradient(90deg, #202020 0 50%, #251f1d 70%, #211e1d 90%, #1f1f1f); display: flex; align-items: center; color: #fff; }
.weather { display: flex; align-items: center; margin-left: 24px; width: 690px; position: relative; line-height: 20px; margin-top: -2px; }
.weather span, .weather em { display: block; font-style: normal; }
.weather em { color: #c4c4c4; }
.weather div { margin-left: 4px; }
.badge { position: absolute; left: 15px; top: -1px; width: 20px; height: 20px; border-radius: 50%; background: #ff9aa5; color: #222; font-weight: 400; font-size: 13px; text-align: center; }
.dock { display: flex; align-items: center; height: 59px; margin-top: -1px; }
.win { width: 29px; height: 29px; }
.tsearch { margin-left: 18px; width: 125px; height: 40px; border-radius: 20px; background: #2d2d2d; border: 1px solid #333; display: flex; align-items: center; padding: 1px 0 0 28px; gap: 6px; }
.tsearch svg { width: 18px; height: 18px; }
.tview { width: 30px; height: 29px; margin: 0 14.500px 0 17px; }
.tile { width: 50px; height: 50px; margin-right: 5px; border-radius: 5px; display: flex; justify-content: center; align-items: center; position: relative; }
.tile svg { width: 30px; height: 30px; }
.tile::after { content: ""; position: absolute; bottom: 1px; left: 21px; width: 8px; height: 4px; border-radius: 2px; background: #9a9a9a; }
.tile.on { background: #302b2a; border: 1px solid #3b3635; }
.tile.on::after { width: 20px; left: 14px; background: #4cc2ff; bottom: 0; }
.pp { font: 700 13px "Open Sans", sans-serif; fill: #fff; }
.tray { margin-left: auto; display: flex; align-items: center; padding-right: 25px; line-height: 20px; font-size: 15px; letter-spacing: 0; margin-top: -1px; }
.lang { width: 30px; margin-left: 26px; text-align: center; letter-spacing: -0.4px; }
.wifi { width: 20px; height: 15px; margin-left: 22px; }
.spk { width: 20px; height: 16px; margin-left: 10px; }
.bat { width: 20px; height: 14px; margin-left: 10px; }
.clock { width: 97px; text-align: right; letter-spacing: -0.1px; }
```
